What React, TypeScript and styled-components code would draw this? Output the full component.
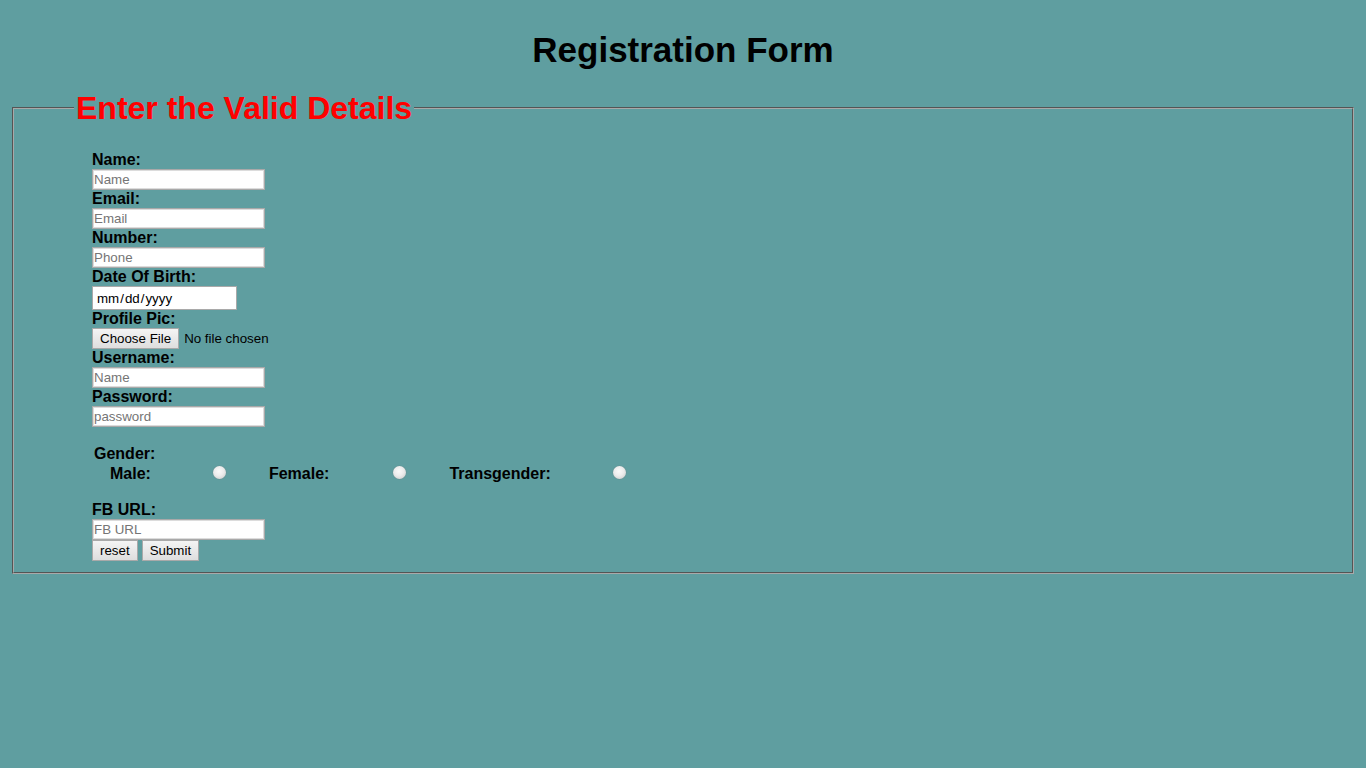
import React from "react";
import styled, { createGlobalStyle } from "styled-components";

const GlobalStyle = createGlobalStyle`
  html, body {
    margin: 0;
    padding: 0;
    background: #5f9ea0;
    font-family: "Liberation Sans", Arial, sans-serif;
    color: #000;
  }
`;

const Page = styled.div`
  padding-top: 30px;
  min-height: 738px;
`;

const Title = styled.h1`
  margin: 0;
  text-align: center;
  font-size: 35px;
  line-height: 40px;
  font-weight: bold;
`;

const Fieldset = styled.fieldset`
  margin: 20px 12px 0;
  padding: 0 10px 11px 60px;
  border: 2px groove #a9a9a9;
`;

const Legend = styled.legend`
  padding: 0 2px;
  font-size: 32px;
  line-height: 36px;
  font-weight: bold;
  color: #ff0000;
`;

const Form = styled.form`
  padding: 25px 0 0 18px;
`;

const Label = styled.label`
  display: block;
  font-size: 16px;
  line-height: 18px;
  font-weight: bold;
`;

const TextInput = styled.input`
  display: block;
  box-sizing: border-box;
  width: 173px;
  height: 21px;
  margin: 0;
  padding: 1px 1px;
  border: 1px solid #a9a9a9;
  outline: 1px solid #dcdcdc;
  outline-offset: -2px;
  background: #fff;
  font-family: "Liberation Sans", Arial, sans-serif;
  font-size: 13.33px;
  &::placeholder {
    color: #757575;
  }
`;

const DateInput = styled.input`
  display: block;
  box-sizing: border-box;
  width: 145px;
  height: 24px;
  margin: 0;
  padding: 1px 2px;
  border: 1px solid #a9a9a9;
  background: #fff;
  font-family: "Liberation Sans", Arial, sans-serif;
  font-size: 13.33px;
  color: #000;
  &::-webkit-calendar-picker-indicator {
    display: none;
  }
  &::-webkit-datetime-edit {
    padding: 0 0 0 1px;
  }
`;

const FileInput = styled.input`
  display: block;
  height: 21px;
  margin: 0;
  font-family: "Liberation Sans", Arial, sans-serif;
  font-size: 13.33px;
  line-height: 21px;
  color: #000;
  &::file-selector-button {
    box-sizing: border-box;
    height: 21px;
    margin: 0 5px 0 0;
    padding: 0 7px;
    border: 1px solid #a9a9a9;
    border-radius: 0;
    background: linear-gradient(#f4f4f4, #dedede);
    font-family: "Liberation Sans", Arial, sans-serif;
    font-size: 13.33px;
    color: #000;
  }
`;

const GenderBlock = styled.div`
  margin-top: 15px;
  padding-left: 2px;
`;

const GenderTitle = styled.div`
  font-size: 16px;
  line-height: 18px;
  font-weight: bold;
  padding: 3px 0 0;
`;

const GenderRow = styled.div`
  display: flex;
  align-items: center;
  height: 20px;
  padding-left: 16px;
`;

const OptionLabel = styled.span<{ $gap: number }>`
  font-size: 16px;
  line-height: 18px;
  font-weight: bold;
  margin-right: ${(p) => p.$gap}px;
  position: relative;
  top: 1px;
`;

const Radio = styled.input`
  appearance: none;
  -webkit-appearance: none;
  width: 13px;
  height: 13px;
  margin: 0 43px 0 0;
  border-radius: 50%;
  border: none;
  background: radial-gradient(circle at 45% 40%, #fafafa 0%, #ececec 45%, #d0d0d0 85%, #b8b8b8 100%);
  box-shadow: 0 0 0 0.5px rgba(120, 120, 120, 0.35);
  position: relative;
  top: -1px;
`;

const FBLabel = styled(Label)`
  margin-top: 18px;
`;

const ButtonRow = styled.div`
  display: flex;
  gap: 4px;
`;

const Button = styled.button`
  box-sizing: border-box;
  height: 21px;
  margin: 0;
  padding: 0 7px;
  border: 1px solid #a9a9a9;
  border-radius: 0;
  background: linear-gradient(#f4f4f4, #dedede);
  font-family: "Liberation Sans", Arial, sans-serif;
  font-size: 13.33px;
  color: #000;
`;

export default function App() {
  return (
    <>
      <GlobalStyle />
      <Page>
        <Title>Registration Form</Title>
        <Fieldset>
          <Legend>Enter the Valid Details</Legend>
          <Form onSubmit={(e) => e.preventDefault()}>
            <Label>Name:</Label>
            <TextInput type="text" placeholder="Name" />
            <Label>Email:</Label>
            <TextInput type="email" placeholder="Email" />
            <Label>Number:</Label>
            <TextInput type="tel" placeholder="Phone" />
            <Label>Date Of Birth:</Label>
            <DateInput type="date" />
            <Label>Profile Pic:</Label>
            <FileInput type="file" />
            <Label>Username:</Label>
            <TextInput type="text" placeholder="Name" />
            <Label>Password:</Label>
            <TextInput type="password" placeholder="password" />
            <GenderBlock>
              <GenderTitle>Gender:</GenderTitle>
              <GenderRow>
                <OptionLabel $gap={62}>Male:</OptionLabel>
                <Radio type="radio" name="gender" />
                <OptionLabel $gap={64}>Female:</OptionLabel>
                <Radio type="radio" name="gender" />
                <OptionLabel $gap={62}>Transgender:</OptionLabel>
                <Radio type="radio" name="gender" />
              </GenderRow>
            </GenderBlock>
            <FBLabel>FB URL:</FBLabel>
            <TextInput type="url" placeholder="FB URL" />
            <ButtonRow>
              <Button type="reset">reset</Button>
              <Button type="submit">Submit</Button>
            </ButtonRow>
          </Form>
        </Fieldset>
      </Page>
    </>
  );
}
